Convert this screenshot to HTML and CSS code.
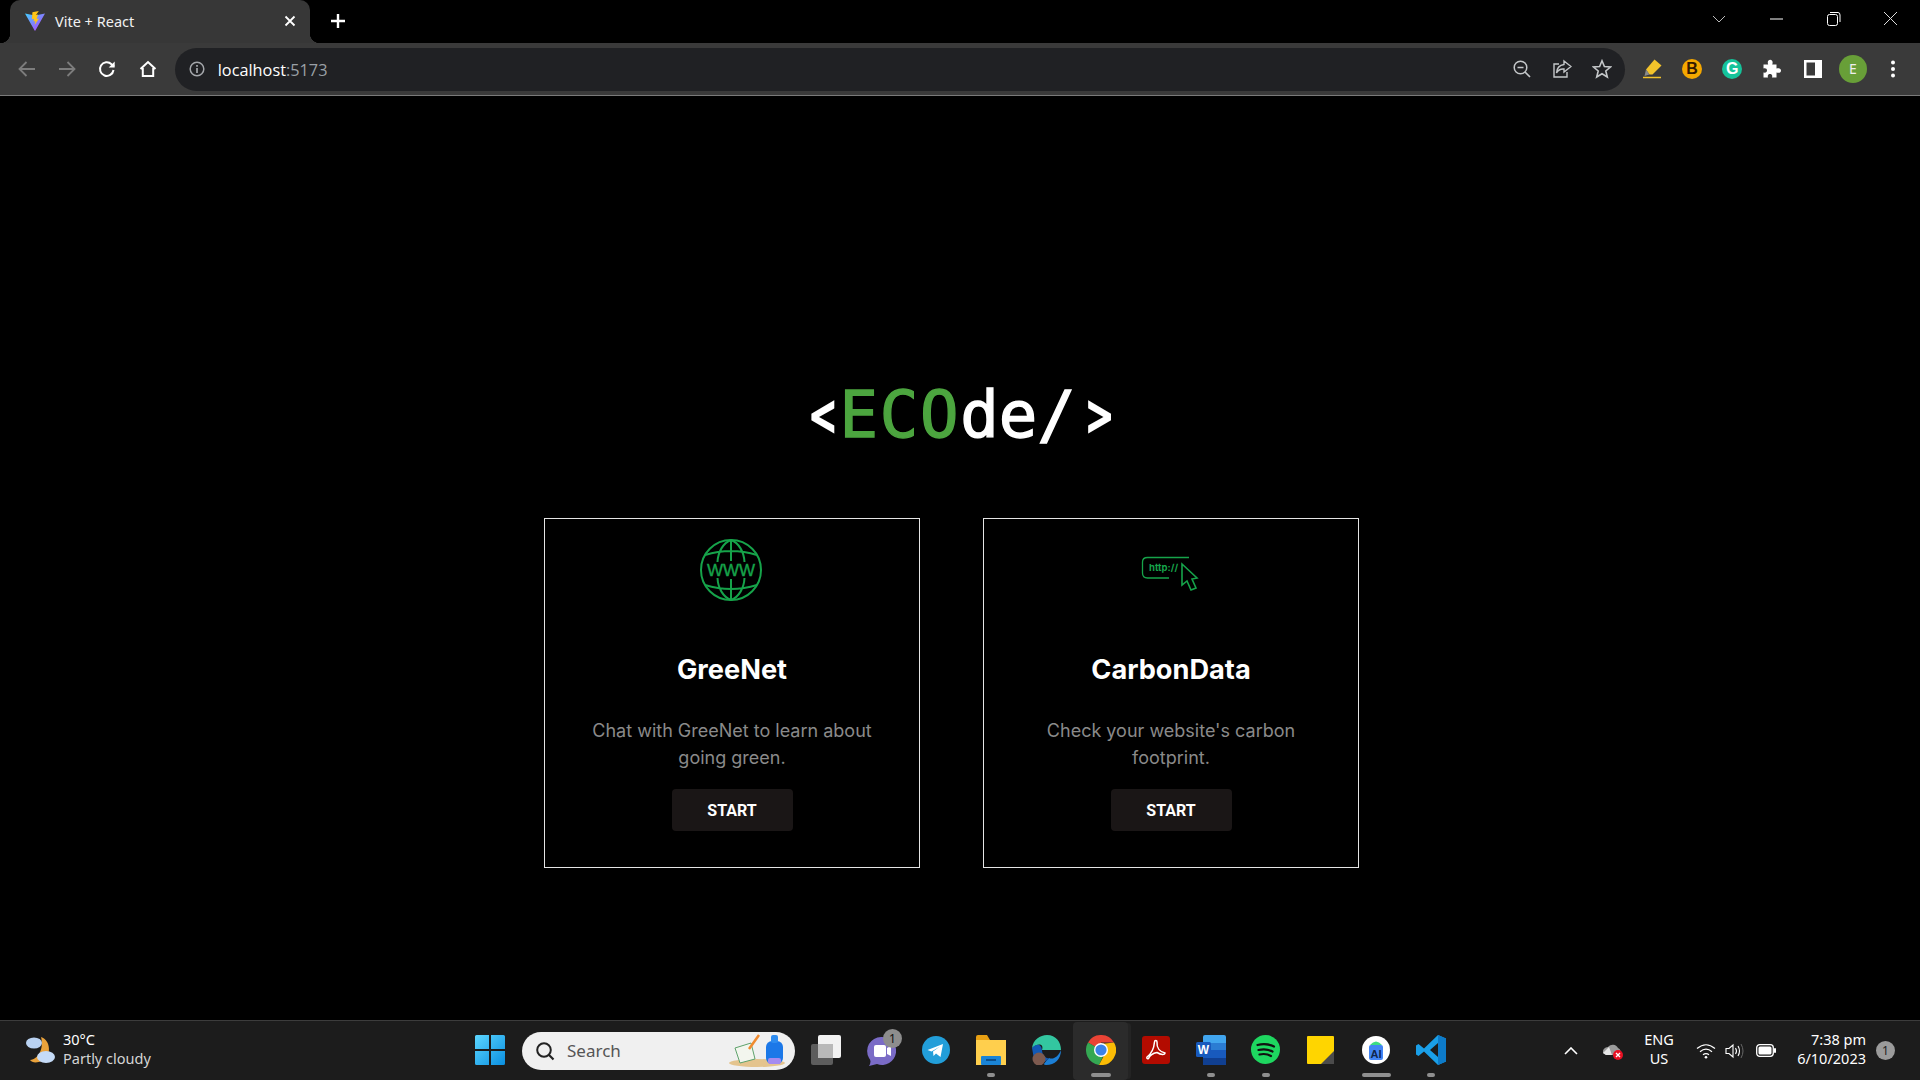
FILE: index.html
```html
<!DOCTYPE html>
<html lang="en">
<head>
<meta charset="utf-8">
<title>Vite + React</title>
<link rel="stylesheet" href="styles.css">
</head>
<body>
<div class="screen">
  <header class="tabstrip">
    <div class="tab">
      <svg class="favicon" width="20" height="20" viewBox="0 0 20 20"><defs><linearGradient id="vg" x1="0" y1="0" x2="1" y2="1"><stop offset="0" stop-color="#41d1ff"/><stop offset="1" stop-color="#bd34fe"/></linearGradient></defs><path d="M0 2.500 10 4.500 20 2.500 10.400 19.500Q10 20 9.600 19.500Z" fill="url(#vg)"/><path d="M13.800 0 7.400 1.300 7 8.200 9 7.800 8.600 10.500 10.400 10 9.600 14 14 7.500 11.700 8 13 3.600 11 4Z" fill="#ffc517"/></svg>
      <span class="tab-title">Vite + React</span>
      <svg class="tab-close" width="12" height="12" viewBox="0 0 12 12"><path d="M1.500 1.500 10.500 10.500M10.500 1.500 1.500 10.500" stroke="#fff" stroke-width="1.800"/></svg>
    </div>
    <svg class="new-tab" width="16" height="16" viewBox="0 0 16 16"><path d="M8 1V15M1 8H15" stroke="#fff" stroke-width="2.400"/></svg>
    <div class="window-controls">
      <svg class="win-btn chev" width="14" height="8" viewBox="0 0 14 8"><path d="M1 1 7 7 13 1" fill="none" stroke="#bbb" stroke-width="1"/></svg>
      <svg class="win-btn" width="57" height="14" viewBox="0 0 57 14"><path d="M22 7H35" stroke="#fff" stroke-width="1"/></svg>
      <svg class="win-btn" width="57" height="14" viewBox="0 0 57 14"><rect x="22.500" y="2.500" width="10" height="11" rx="2" fill="none" stroke="#fff"/><path d="M25 .5H33Q35 .5 35 3V10" fill="none" stroke="#fff"/></svg>
      <svg class="win-btn" width="57" height="14" viewBox="0 0 57 14"><path d="M22 0 35 13M35 0 22 13" stroke="#ddd" stroke-width="1"/></svg>
    </div>
  </header>

  <nav class="toolbar">
    <span class="tool"><svg width="20" height="20" viewBox="0 0 20 20"><path d="M18 10H3M9.500 3 2.500 10 9.500 17" fill="none" stroke="#7d7d7d" stroke-width="1.800"/></svg></span>
    <span class="tool"><svg width="20" height="20" viewBox="0 0 20 20"><path d="M2 10H17M10.500 3 17.500 10 10.500 17" fill="none" stroke="#7d7d7d" stroke-width="1.800"/></svg></span>
    <span class="tool"><svg width="20" height="20" viewBox="0 0 20 20"><path d="M16.500 11A6.800 6.800 0 1 1 14.500 5.200L17 7.500" fill="none" stroke="#fff" stroke-width="2"/><path d="M17.700 2.500V8.500H11.700Z" fill="#fff"/></svg></span>
    <span class="tool"><svg width="20" height="20" viewBox="0 0 20 20"><path d="M2.500 10 10 3 17.500 10M4.800 9V17H15.200V9" fill="none" stroke="#fff" stroke-width="2"/></svg></span>
    <div class="omnibox">
      <svg class="info" width="16" height="16" viewBox="0 0 16 16"><circle cx="8" cy="8" r="6.800" fill="none" stroke="#a4a7ab" stroke-width="1.500"/><path d="M8 7V12M8 4V5.700" stroke="#a4a7ab" stroke-width="1.700"/></svg>
      <span class="url">localhost<span class="port">:5173</span></span>
      <span class="omni-actions">
        <svg width="20" height="20" viewBox="0 0 20 20"><circle cx="8.500" cy="8.500" r="6.300" fill="none" stroke="#c4c7c9" stroke-width="1.500"/><path d="M5.500 8.500H11.500M13 13 18 18" stroke="#c4c7c9" stroke-width="1.700"/></svg>
        <svg width="20" height="20" viewBox="0 0 20 20"><path d="M7 5H2V18H15V13" fill="none" stroke="#c4c7c9" stroke-width="1.400"/><path d="M12 2 19 7.500 12 13V10Q7 9.500 4.500 14 5 6.500 12 5.500Z" fill="none" stroke="#c4c7c9" stroke-width="1.400"/></svg>
        <svg width="20" height="20" viewBox="0 0 20 20"><path d="M10 1.800 12.400 7.500 18.500 8 13.800 12 15.300 18 10 14.800 4.700 18 6.200 12 1.500 8 7.600 7.500Z" fill="none" stroke="#c4c7c9" stroke-width="1.600"/></svg>
      </span>
    </div>
    <div class="extensions">
      <span class="tool"><svg width="20" height="20" viewBox="0 0 20 20"><path d="M4 10.500 12.500 .5 19.500 6.500 10.500 15.500H7.500Z" fill="#f3c32b"/><path d="M4 10.500 7.500 15.500 2.500 17Z" fill="#8a8a8a"/><path d="M1 18.500H19" stroke="#f3c32b" stroke-width="1.500"/></svg></span>
      <span class="tool"><span class="ext-b">B</span></span>
      <span class="tool"><span class="ext-g">G</span></span>
      <span class="tool"><svg width="20" height="20" viewBox="0 0 20 20"><path d="M1.500 5.500H6.200C5 2.500 6.500.8 8.200.8S11.400 2.500 10.200 5.500H14.500V9.500C17.500 8.500 19 9.800 19 11.500S17.500 14.500 14.500 13.500V18.500H10C10.800 16 9.500 15 8 15S5.200 16 6 18.500H1.500V13.500C3.800 14 5 13 5 11.500S3.800 9 1.500 9.500Z" fill="#fff"/></svg></span>
      <span class="tool"><svg width="18" height="18" viewBox="0 0 18 18"><path d="M0 0H18V18H0ZM2.500 2.500V15.500H11V2.500Z" fill="#fff" fill-rule="evenodd"/></svg></span>
      <span class="tool"><span class="avatar">E</span></span>
      <span class="tool"><svg width="6" height="18" viewBox="0 0 6 18"><circle cx="3" cy="2.500" r="2" fill="#fff"/><circle cx="3" cy="9" r="2" fill="#fff"/><circle cx="3" cy="15.500" r="2" fill="#fff"/></svg></span>
    </div>
  </nav>

  <main class="page">
    <h1 class="logo"><span class="bracket open">&lt;</span><span class="logo-green">ECO</span>de/<span class="bracket close">&gt;</span></h1>
    <section class="cards">
      <article class="card">
        <svg class="card-icon globe" width="64" height="64" viewBox="0 0 64 64" fill="none" stroke="#16a34a" stroke-width="2">
          <circle cx="32" cy="32" r="30"/>
          <path d="M6 17Q32 9 58 17M32 2V23M32 2C24 5 19 14 18.500 24M32 2C40 5 45 14 45.500 24"/>
          <path d="M6 47Q32 55 58 47M32 62V41M32 62C24 59 19 50 18.500 40M32 62C40 59 45 50 45.500 40"/>
          <text class="www" x="32" y="38.300" text-anchor="middle">WWW</text>
        </svg>
        <h2 class="card-title">GreeNet</h2>
        <p class="card-text">Chat with GreeNet to learn about going green.</p>
        <button class="start">START</button>
      </article>
      <article class="card">
        <svg class="card-icon" width="64" height="64" viewBox="0 0 64 64" fill="none" stroke="#16a34a" stroke-width="1.300">
          <path d="M50 19.500H8.500Q3.500 19.500 3.500 24V35Q3.500 40 8.500 40H30"/>
          <text class="http" x="10" y="32.500">http://</text>
          <path d="M43 26V47L48 43 52 52 57 50 53 41 58 40Z" stroke-width="1.600"/>
        </svg>
        <h2 class="card-title">CarbonData</h2>
        <p class="card-text">Check your website's carbon footprint.</p>
        <button class="start">START</button>
      </article>
    </section>
  </main>

  <footer class="taskbar">
    <div class="weather">
      <svg width="34" height="34" viewBox="0 0 34 34"><path d="M17 3C27 6 28 23 18 27 13 29 8 29 6 26 15 25 20 14 17 3Z" fill="#e9a23b"/><ellipse cx="10" cy="9" rx="8" ry="5.500" fill="#b9d2f2"/><ellipse cx="22" cy="23" rx="9" ry="6" fill="#c5dbf7"/></svg>
      <div class="weather-text"><span>30°C</span><span class="weather-sub">Partly cloudy</span></div>
    </div>
    <div class="task-slot start-menu"><svg width="30" height="30" viewBox="0 0 30 30"><defs><linearGradient id="win" x1="0" y1="0" x2="1" y2="1"><stop offset="0" stop-color="#5cd6ff"/><stop offset="1" stop-color="#0a8fe0"/></linearGradient></defs><path d="M0 1.500Q0 0 1.500 0H14V14H0ZM16 0H28.500Q30 0 30 1.500V14H16ZM0 16H14V30H1.500Q0 30 0 28.500ZM16 16H30V28.500Q30 30 28.500 30H16Z" fill="url(#win)"/></svg></div>
    <div class="search">
      <svg width="20" height="20" viewBox="0 0 20 20"><circle cx="9" cy="9" r="6.800" fill="none" stroke="#222" stroke-width="2"/><path d="M13.800 13.800 18.500 18.500" stroke="#222" stroke-width="2.200"/></svg>
      <span class="search-label">Search</span>
      <svg class="search-art" width="62" height="34" viewBox="0 0 62 34"><ellipse cx="30" cy="29" rx="28" ry="4" fill="#e4c48e"/><path d="M8 14 24 9 28 25 13 29Z" fill="#f3f6ee" stroke="#5ea26c"/><path d="M32 1 22 15" stroke="#f08a2e" stroke-width="2.500"/><rect x="39" y="7" width="17" height="23" rx="6" fill="#1c78e8"/><rect x="44" y="1" width="7" height="8" rx="2" fill="#2d8cf0"/><rect x="41" y="24" width="13" height="6" rx="2" fill="#a58bf0"/></svg>
    </div>
    <div class="task-icons">
      <div class="task-slot"><svg width="32" height="30" viewBox="0 0 32 30"><rect x="1" y="9" width="22" height="21" rx="2" fill="#5d5d5d"/><rect x="8" y="0" width="23" height="23" rx="2" fill="#f2f2f2"/><rect x="8" y="9" width="15" height="14" fill="#b9b9b9"/></svg></div>
      <div class="task-slot"><svg width="30" height="32" viewBox="0 0 30 32"><path d="M15 3A14 14 0 1 1 11 30L3 32Q6 27 3 24A14 14 0 0 1 15 3Z" fill="#7a6bc6"/><rect x="8" y="11" width="12" height="12" rx="2" fill="#fff"/><path d="M21 14 25 12V22L21 20Z" fill="#fff"/></svg><span class="badge">1</span></div>
      <div class="task-slot"><svg width="28" height="28" viewBox="0 0 28 28"><circle cx="14" cy="14" r="14" fill="#229ed9"/><path d="M5.500 14 21 8 18.500 21 14 17.500 11.500 20 11 15.500 18 10.500 9.500 15.500Z" fill="#fff"/></svg></div>
      <div class="task-slot"><svg width="30" height="30" viewBox="0 0 30 30"><path d="M0 2Q0 0 2 0H11L14 5H28V10H0Z" fill="#e8a013"/><rect y="5" width="30" height="25" fill="#ffcf4d"/><rect x="5" y="21" width="20" height="9" rx="1" fill="#1a84d6"/><path d="M10 25H20" stroke="#083e73" stroke-width="1.500"/></svg><i class="pip"></i></div>
      <div class="task-slot"><svg width="30" height="30" viewBox="0 0 30 30"><path d="M1 13C2 5 9 0 16 0 25 0 30 7 30 15H11C13 9 8 7 1 13Z" fill="#33c6a0"/><path d="M30 15C30 24 24 30 15 30 10 30 16 26 18 23 22 25 27 22 30 15Z" fill="#1c7fd6"/><path d="M1 13C5 9 10 8 11 15 11 20 15 24 18 23 14 29 6 28 3 24Z" fill="#1259b5"/><circle cx="8" cy="24" r="6.500" fill="#7d5a4f"/></svg></div>
      <div class="task-slot active"><svg width="30" height="30" viewBox="0 0 30 30"><path d="M15 15 2 7.500A15 15 0 0 1 28 7.500H15Z" fill="#ea4335"/><path d="M2 7.500A15 15 0 0 0 13 29.900L20 15H15Z" fill="#34a853"/><path d="M28 7.500A15 15 0 0 1 13 29.900L21 15Q21 11 15 9Z" fill="#fbbc05"/><circle cx="15" cy="15" r="7" fill="#fff"/><circle cx="15" cy="15" r="5.600" fill="#3b82e8"/></svg><i class="pip wide"></i></div>
      <div class="task-slot"><svg width="28" height="28" viewBox="0 0 28 28"><rect width="28" height="28" rx="3" fill="#b30b00"/><path d="M5 21C9 18 12 12 12.500 6 12.500 4 15 4 15 6 14.500 12 18 16 23 17 23 19 19 19 15 16.500 12 17 8 19 6.500 22.500 5 23 4.500 22 5 21Z" fill="none" stroke="#fff" stroke-width="1.500"/></svg></div>
      <div class="task-slot"><svg width="30" height="30" viewBox="0 0 30 30"><rect x="7" width="23" height="30" rx="2" fill="#41a5ee"/><rect x="7" y="15" width="23" height="8" fill="#185abd"/><rect x="7" y="8" width="23" height="7" fill="#2b7cd3"/><rect x="7" y="23" width="23" height="7" fill="#103f91"/><rect y="7" width="15" height="15" rx="1.500" fill="#185abd"/><text class="word-w" x="7.500" y="19" text-anchor="middle">W</text></svg><i class="pip"></i></div>
      <div class="task-slot"><svg width="29" height="29" viewBox="0 0 29 29"><circle cx="14.500" cy="14.500" r="14.500" fill="#1ed760"/><path d="M6.500 10Q15 7.500 23 11.500M7.500 15Q15 13 21.500 16.500M8.500 19.500Q15 18 20 21" fill="none" stroke="#111" stroke-width="2.200" stroke-linecap="round"/></svg><i class="pip"></i></div>
      <div class="task-slot"><svg width="27" height="28" viewBox="0 0 27 28"><rect width="27" height="28" rx="1" fill="#ffd500"/><path d="M14 28 27 15V28Z" fill="#4b4b4b"/></svg></div>
      <div class="task-slot"><svg width="28" height="30" viewBox="0 0 28 30"><circle cx="14" cy="15" r="14" fill="#fff"/><path d="M8 10Q14 3 20 10Z" fill="#3ddc84"/><rect x="7" y="10" width="14" height="15" rx="2" fill="#4285f4"/><text class="as-a" x="14" y="23" text-anchor="middle">AI</text></svg><i class="pip long"></i></div>
      <div class="task-slot"><svg width="30" height="30" viewBox="0 0 30 30"><path d="M22 0 30 3.500V26.500L22 30 8 16.500 2.500 21 0 19.500V10.500L2.500 9 8 13.500ZM22 8 14 15 22 22Z" fill="#1a9fe8" fill-rule="evenodd"/><path d="M22 0 30 3.500V26.500L22 30Z" fill="#0d7bc9"/></svg><i class="pip"></i></div>
    </div>
    <div class="tray">
      <svg class="tray-chevron" width="14" height="8" viewBox="0 0 14 8"><path d="M1 7 7 1 13 7" fill="none" stroke="#fff" stroke-width="1.600"/></svg>
      <svg class="tray-cloud" width="20" height="18" viewBox="0 0 20 18"><path d="M0 11A5 5 0 0 1 5 5 6 6 0 0 1 15 6 4 4 0 0 1 16 13H3Z" fill="#9a9a9a"/><path d="M0 11 6 5 9 13H3Z" fill="#e6e6e6"/><circle cx="15" cy="13" r="5" fill="#e81123"/><path d="M13 11 17 15M17 11 13 15" stroke="#fff" stroke-width="1.300"/></svg>
      <div class="lang"><span>ENG</span><span>US</span></div>
      <svg class="tray-wifi" width="20" height="16" viewBox="0 0 20 16"><path d="M1 5.500Q10 -2 19 5.500M4 8.700Q10 3.500 16 8.700M7 11.800Q10 9.500 13 11.800" fill="none" stroke="#fff" stroke-width="1.200"/><circle cx="10" cy="14.300" r="1.300" fill="#fff"/></svg>
      <svg class="tray-vol" width="20" height="16" viewBox="0 0 20 16"><path d="M1 5.500H4L8 2V14L4 10.500H1Z" fill="none" stroke="#fff" stroke-width="1.100"/><path d="M10.500 5Q12.500 8 10.500 11M13 3Q16 8 13 13" fill="none" stroke="#fff" stroke-width="1.100"/><path d="M16 1Q20 8 16 15" fill="none" stroke="#666" stroke-width="1"/></svg>
      <svg class="tray-bat" width="20" height="13" viewBox="0 0 20 13"><rect x=".7" y=".7" width="16.600" height="11.600" rx="3" fill="none" stroke="#fff" stroke-width="1.300"/><rect x="2.500" y="2.500" width="13" height="8" rx="1.500" fill="#fff"/><rect x="18" y="4" width="2" height="5" rx="1" fill="#fff"/></svg>
      <div class="clock"><span>7:38 pm</span><span>6/10/2023</span></div>
      <span class="notif">1</span>
    </div>
  </footer>
</div>
</body>
</html>
```

FILE: styles.css
```css
* { box-sizing: border-box; }
html, body { margin: 0; height: 100%; background: #000; }
.screen { width: 1920px; height: 1080px; display: flex; flex-direction: column; overflow: hidden; font-family: "Noto Sans", sans-serif; color: #fff; }

/* Browser chrome */
.tabstrip { height: 43px; background: #000; display: flex; align-items: center; padding-left: 10px; flex: none; }
.tab { position: relative; width: 300px; height: 43px; background: #373737; border-radius: 10px 10px 0 0; display: flex; align-items: center; padding: 0 14px 2px 15px; }
.tab::before, .tab::after { content: ""; position: absolute; bottom: 0; width: 10px; height: 10px; }
.tab::before { left: -10px; background: radial-gradient(circle at 0 0, #000 10px, #373737 10.5px); }
.tab::after { right: -10px; background: radial-gradient(circle at 100% 0, #000 10px, #373737 10.5px); }
.favicon { flex: none; }
.tab-title { margin-left: 10px; font-size: 14.5px; flex: 1; color: #f1f1f1; }
.new-tab { margin-left: 20px; margin-top: -1px; flex: none; }
.window-controls { margin-left: auto; display: flex; align-items: center; padding-right: 1px; height: 100%; padding-bottom: 6px; }
.chev { margin-right: 22px; }
.toolbar { height: 53px; flex: none; background: #3a3a3a; border-bottom: 1px solid #7a7a7a; display: flex; align-items: center; padding: 0 8px 0 7px; }
.tool { width: 40.2px; height: 40px; display: flex; align-items: center; justify-content: center; flex: none; }
.omnibox { width: 1450px; height: 43px; margin-left: 7px; border-radius: 22px; background: #202124; display: flex; align-items: center; padding: 0 13px 0 14px; flex: none; }
.info { flex: none; }
.url { margin-left: 13px; font-size: 16.3px; line-height: 22px; padding-top: 1px; color: #fff; font-family: "Open Sans", sans-serif; }
.port { color: #9aa0a6; }
.omni-actions { margin-left: auto; display: flex; gap: 20px; }
.extensions { display: flex; margin-left: 7px; }
.ext-b { width: 20px; height: 20px; border-radius: 50%; background: #f5a800; color: #331a00; font: 700 16px/20px "Liberation Sans", sans-serif; text-align: center; }
.ext-g { width: 20px; height: 20px; border-radius: 50%; background: #15c39a; color: #fff; font: 700 16px/20px "Liberation Sans", sans-serif; text-align: center; }
.avatar { width: 28px; height: 28px; border-radius: 50%; background: #689f38; color: #eee; font: 400 14px/28px "Noto Sans", sans-serif; text-align: center; }

/* Page */
.page { flex: 1; background: #000; display: flex; flex-direction: column; align-items: center; padding-top: 282px; }
.logo { margin: 0; padding-left: 9px; font: 400 64px/74px "DejaVu Sans Mono", monospace; color: #fff; -webkit-text-stroke: 1.4px currentColor; display: flex; }
.bracket { display: block; text-align: center; font-size: 50px; -webkit-text-stroke: 2px currentColor; transform: scale(.82, 1.22); }
.bracket.open { width: 33.5px; }
.bracket.close { width: 47px; }
.logo-green { color: #4ca53f; letter-spacing: 1.7px; }
.cards { display: flex; gap: 63px; margin-top: 66px; margin-right: 17px; }
.card { width: 376px; height: 350px; border: 1px solid #e5e5e5; padding: 19px 40px 0; display: flex; flex-direction: column; align-items: center; text-align: center; }
.card-icon { flex: none; }
.globe { margin-left: -2px; }
.www { font: 400 17px "Liberation Sans", sans-serif; fill: #16a34a; stroke: #16a34a; stroke-width: .4px; }
.http { font: 700 9.500px "Inter", sans-serif; fill: #16a34a; stroke: none; }
.card-title { margin: 51px 0 0; font: 700 27.2px/34px "Inter", sans-serif; color: #fff; }
.card-text { margin: 30px 0 0; font: 400 18px/27px "Inter", sans-serif; color: #8a8a8a; }
.start { margin-top: 18px; width: 121px; height: 42px; border: 0; border-radius: 4px; background: #1a1616; color: #fff; font: 700 16px "Roboto", sans-serif; }

/* Taskbar */
.taskbar { height: 60px; flex: none; background: #1c1c1c; border-top: 1px solid #3c3c3c; display: flex; align-items: center; }
.weather { width: 462px; flex: none; display: flex; align-items: center; padding-left: 24px; gap: 5px; }
.weather-text { display: flex; flex-direction: column; font-size: 14.5px; line-height: 19.5px; margin-top: -3px; }
.weather-sub { color: #d4d4d4; }
.task-slot { position: relative; width: 55px; height: 58px; display: flex; align-items: center; justify-content: center; flex: none; padding-bottom: 2px; }
.start-menu { width: 55px; }
.search { width: 273px; height: 38px; margin-left: 5px; border-radius: 19px; background: #f0f0f0; display: flex; align-items: center; padding-left: 13px; flex: none; }
.search-label { margin-left: 12px; color: #555; font-size: 17px; }
.search-art { margin-left: auto; margin-right: 6px; }
.task-icons { display: flex; margin-left: 3px; flex: none; }
.active { background: #2b2b2b; border-radius: 4px; box-shadow: 4px 0 0 -1px #242424; }
.badge { position: absolute; top: 7px; right: 6px; width: 19px; height: 19px; border-radius: 50%; background: #8d8d8d; color: #111; font-size: 12px; line-height: 19px; text-align: center; }
.pip { position: absolute; bottom: 3px; left: 50%; width: 8px; height: 4px; margin-left: -4px; border-radius: 2px; background: #8f8f8f; }
.pip.wide { width: 20px; margin-left: -10px; }
.pip.long { width: 29px; margin-left: -14px; }
.word-w { font: 700 12px "Liberation Sans", sans-serif; fill: #fff; }
.as-a { font: 700 11px "Liberation Sans", sans-serif; fill: #10264a; }
.tray { flex: 1; display: flex; align-items: center; min-width: 0; }
.tray-chevron { margin-left: 106px; flex: none; }
.tray-cloud { margin-left: 25px; flex: none; }
.lang { margin-left: 18px; width: 36px; display: flex; flex-direction: column; align-items: center; font-size: 14.5px; line-height: 19.5px; margin-top: -3px; flex: none; }
.tray-wifi { margin-left: 19px; flex: none; }
.tray-vol { margin-left: 9px; flex: none; }
.tray-bat { margin-left: 11px; flex: none; }
.clock { width: 90px; display: flex; flex-direction: column; align-items: flex-end; font-size: 14.5px; line-height: 19.5px; margin-top: -3px; flex: none; }
.notif { margin-left: 10px; width: 19px; height: 19px; border-radius: 50%; background: #9b9b9b; color: #222; font-size: 12px; line-height: 19px; text-align: center; flex: none; }
```
